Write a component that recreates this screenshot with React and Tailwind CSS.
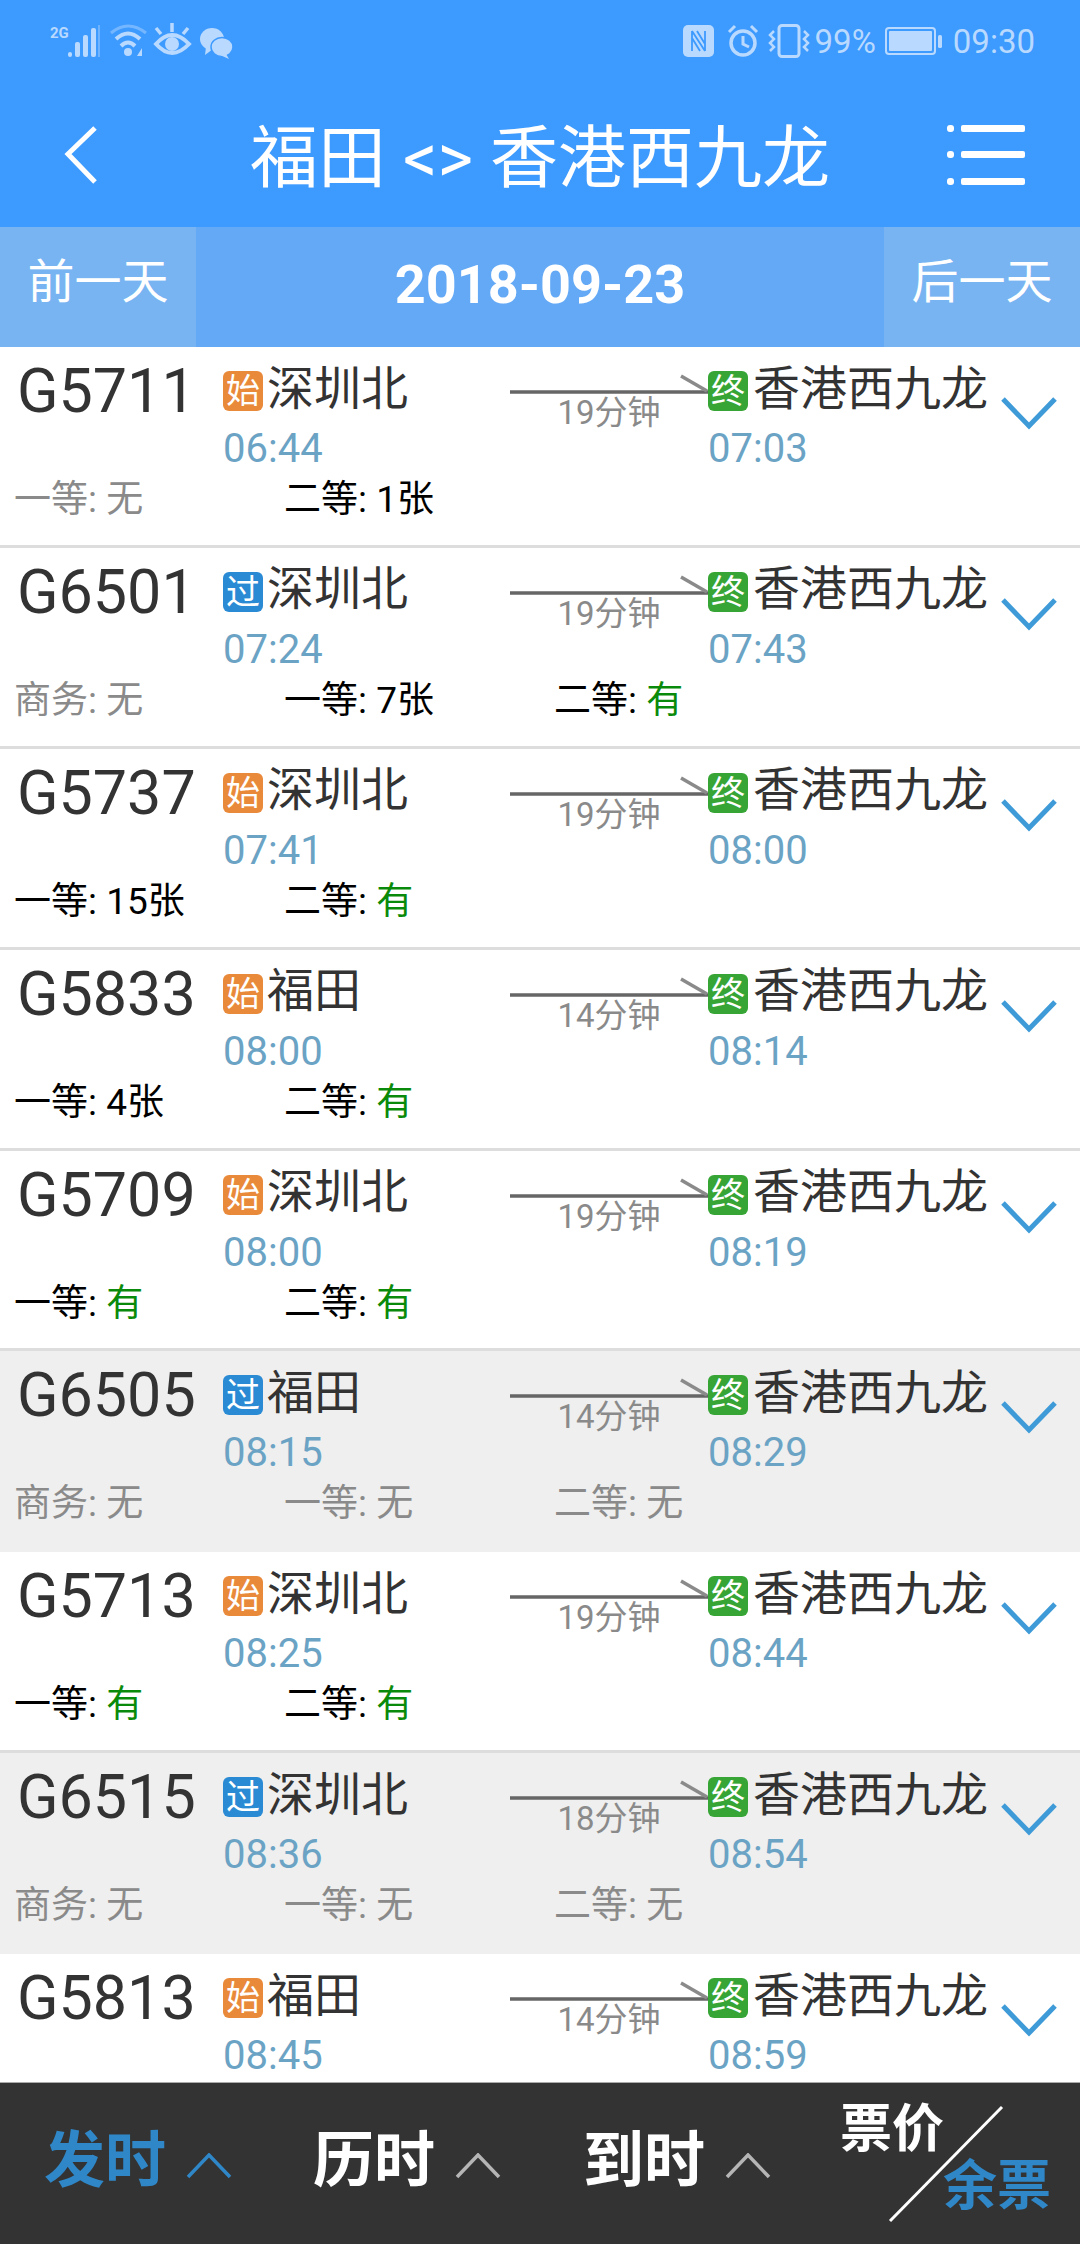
import React from "react";

const FONT = "font-['Roboto','Noto_Sans_CJK_SC',sans-serif]";

const trains = [
  { no: "G5711", tag: "始", from: "深圳北", dep: "06:44", dur: "19分钟", arr: "07:03", seats: [["一等", "无"], ["二等", "1张"]] },
  { no: "G6501", tag: "过", from: "深圳北", dep: "07:24", dur: "19分钟", arr: "07:43", seats: [["商务", "无"], ["一等", "7张"], ["二等", "有"]] },
  { no: "G5737", tag: "始", from: "深圳北", dep: "07:41", dur: "19分钟", arr: "08:00", seats: [["一等", "15张"], ["二等", "有"]] },
  { no: "G5833", tag: "始", from: "福田", dep: "08:00", dur: "14分钟", arr: "08:14", seats: [["一等", "4张"], ["二等", "有"]] },
  { no: "G5709", tag: "始", from: "深圳北", dep: "08:00", dur: "19分钟", arr: "08:19", seats: [["一等", "有"], ["二等", "有"]] },
  { no: "G6505", tag: "过", from: "福田", dep: "08:15", dur: "14分钟", arr: "08:29", soldOut: true, seats: [["商务", "无"], ["一等", "无"], ["二等", "无"]] },
  { no: "G5713", tag: "始", from: "深圳北", dep: "08:25", dur: "19分钟", arr: "08:44", seats: [["一等", "有"], ["二等", "有"]] },
  { no: "G6515", tag: "过", from: "深圳北", dep: "08:36", dur: "18分钟", arr: "08:54", soldOut: true, seats: [["商务", "无"], ["一等", "无"], ["二等", "无"]] },
  { no: "G5813", tag: "始", from: "福田", dep: "08:45", dur: "14分钟", arr: "08:59", seats: [] },
];

const Tag = ({ text }) => {
  const color = text === "始" ? "bg-[#e9893a]" : text === "过" ? "bg-[#2a8ad4]" : "bg-[#36a535]";
  return (
    <span className={`${color} w-10 h-10 rounded-md flex items-center justify-center text-white text-[34px] leading-none shrink-0`}>
      {text}
    </span>
  );
};

const Seat = ({ name, value }) => {
  const none = value === "无";
  return (
    <div className={`w-[270px] text-[37px] leading-[44px] whitespace-nowrap ${none ? "text-[#8a8a8a]" : "text-black"}`}>
      {name}: <span className={value === "有" ? "text-[#0a8a0a]" : ""}>{value}</span>
    </div>
  );
};

const TrainRow = ({ train }) => (
  <div className={`h-[200.9px] shrink-0 flex flex-col border-b-[3px] ${train.soldOut ? "bg-[#efefef] border-[#efefef]" : "bg-white border-[#dddddd]"}`}>
    <div className="flex h-[128px]">
      <div className="w-[223px] pl-[17px] pt-[9px] text-[61px] leading-[70px] text-[#333333] shrink-0">{train.no}</div>

      <div className="w-[287px] shrink-0">
        <div className="flex items-center h-[80px] pt-[8px]">
          <Tag text={train.tag} />
          <span className="text-[47px] leading-none text-[#333333] ml-[4px] -mt-[6px]">{train.from}</span>
        </div>
        <div className="text-[40px] leading-[44px] text-[#6ba3c5]">{train.dep}</div>
      </div>

      <div className="w-[198px] shrink-0 pt-[31px] relative">
        <svg width="198" height="20" viewBox="0 0 198 20" className="block absolute top-[27px] left-0">
          <path d="M0 18H198" stroke="#666666" strokeWidth="3.5" />
          <path d="M171 2L197 17" stroke="#8a8a8a" strokeWidth="3.5" />
        </svg>
        <div className="pt-[15px] text-center text-[33px] leading-[40px] text-[#8a8a8a]">{train.dur}</div>
      </div>

      <div className="w-[294px] shrink-0">
        <div className="flex items-center h-[80px] pt-[8px]">
          <Tag text="终" />
          <span className="text-[47px] leading-none text-[#333333] ml-[5px] -mt-[6px] whitespace-nowrap">香港西九龙</span>
        </div>
        <div className="text-[40px] leading-[44px] text-[#6ba3c5]">{train.arr}</div>
      </div>

      <svg width="58" height="36" viewBox="0 0 58 36" className="shrink-0 mt-[48px] -ml-[2px]">
        <path d="M3 4L29 31L55 4" fill="none" stroke="#3f9bd8" strokeWidth="5" />
      </svg>
    </div>
    <div className="flex pl-[14px] pt-[3px]">
      {train.seats.map((s) => (
        <Seat key={s[0]} name={s[0]} value={s[1]} />
      ))}
    </div>
  </div>
);

const SortBtn = ({ label, active, width }) => (
  <div className={`${width} flex items-center shrink-0`}>
    <span className={`text-[61px] font-bold leading-none -mt-[5px] ${active ? "text-[#2f87c8]" : "text-white"}`}>{label}</span>
    <svg width="46" height="26" viewBox="0 0 46 26" className="ml-[20px] mt-[4px]">
      <path d="M2 24L23 2L44 24" fill="none" stroke={active ? "#2f87c8" : "#b5b5b5"} strokeWidth="3.5" />
    </svg>
  </div>
);

const StatusBar = () => (
  <div className="h-[68px] relative flex justify-between items-start pt-[24px] pl-[50px] pr-[45px] text-[#b9d9ff]">
    <div className="flex items-end h-[36px]">
      <svg width="190" height="38" viewBox="0 0 190 38" fill="#b9d9ff">
        <text x="0" y="16" fontSize="15" fontWeight="700" fontFamily="Roboto">2G</text>
        <rect x="18" y="30" width="4" height="5" rx="2" />
        <rect x="25" y="20" width="5" height="15" rx="2" />
        <rect x="33" y="13" width="5" height="22" rx="2" />
        <rect x="41" y="6" width="5" height="29" rx="2" />
        <rect x="48" y="3" width="2" height="32" opacity="0.4" />
        <path d="M61 11Q78 -3 96 11" fill="none" stroke="#b9d9ff" strokeWidth="3" opacity="0.45" />
        <path d="M66 17Q78 6 90 17" fill="none" stroke="#b9d9ff" strokeWidth="4" />
        <path d="M71 24Q78 17 85 24" fill="none" stroke="#b9d9ff" strokeWidth="4" />
        <circle cx="78" cy="30" r="4" />
        <path d="M87 34L92 26V34Z" />
        <path d="M106 22Q122 4 139 22Q122 40 106 22Z" fill="none" stroke="#b9d9ff" strokeWidth="4" />
        <circle cx="122" cy="22" r="7" />
        <path d="M122 10V1M111 12L106 6M133 12L138 6" stroke="#b9d9ff" strokeWidth="3.5" />
        <ellipse cx="162" cy="17" rx="12" ry="11" />
        <path d="M156 25L155 33L163 27Z" />
        <ellipse cx="172" cy="25" rx="11" ry="9.5" stroke="#3d9aff" strokeWidth="1.5" />
        <path d="M176 32L179 37L170 33Z" />
      </svg>
    </div>
    <div className="flex items-center h-[34px] text-[33px] leading-none">
      <svg width="34" height="34" viewBox="0 0 34 34" className="mr-[10px]">
        <rect x="1" y="1" width="31" height="32" rx="5" fill="#b9d9ff" />
        <path d="M10 7V27M10 7L23 27M23 7V27M15 7L23 20M10 14L18 27" fill="none" stroke="#3d9aff" strokeWidth="1.8" />
      </svg>
      <svg width="34" height="34" viewBox="0 0 34 34" fill="none" stroke="#b9d9ff" className="mr-[8px]">
        <circle cx="17" cy="19" r="12" strokeWidth="3.5" />
        <path d="M17 12V20L23 23" strokeWidth="3" />
        <path d="M3 8L9 2M31 8L25 2" strokeWidth="3" />
      </svg>
      <svg width="42" height="34" viewBox="0 0 42 34" fill="none" stroke="#b9d9ff" className="mr-[5px]">
        <rect x="11" y="1.5" width="20" height="31" rx="3" strokeWidth="3" />
        <path d="M6 7L2 11L6 15L2 19L6 23L2 27M36 7L40 11L36 15L40 19L36 23L40 27" strokeWidth="2.5" />
      </svg>
      <span>99%</span>
      <svg width="60" height="28" viewBox="0 0 60 28" className="ml-[9px] mr-[8px]">
        <rect x="1" y="1" width="49" height="26" rx="3" fill="none" stroke="#b9d9ff" strokeWidth="2" />
        <rect x="4" y="4" width="43" height="20" rx="1" fill="#b9d9ff" />
        <rect x="53" y="8" width="4" height="13" rx="1.5" fill="#b9d9ff" />
      </svg>
      <span>09:30</span>
    </div>
  </div>
);

export default function App() {
  return (
    <div className={`${FONT} w-[1080px] h-[2244px] flex flex-col overflow-hidden bg-white`}>
      <div className="bg-[#3d9aff] shrink-0">
        <StatusBar />
        <div className="h-[159px] flex items-center relative">
          <svg width="38" height="60" viewBox="0 0 38 60" className="absolute left-[62px] top-[57px]">
            <path d="M33 3L6 29L33 57" fill="none" stroke="white" strokeWidth="5" />
          </svg>
          <div className="w-full text-center text-white text-[68px] leading-none whitespace-nowrap pt-[22px]">
            福田 &lt;&gt; 香港西九龙
          </div>
          <svg width="80" height="62" viewBox="0 0 80 62" className="absolute left-[946px] top-[56px]" fill="white">
            <rect x="1" y="1" width="7" height="7" rx="3" />
            <rect x="1" y="27" width="7" height="7" rx="3" />
            <rect x="1" y="54" width="7" height="7" rx="3" />
            <rect x="15" y="1" width="64" height="7" rx="2" />
            <rect x="15" y="27" width="64" height="7" rx="2" />
            <rect x="15" y="54" width="64" height="7" rx="2" />
          </svg>
        </div>
      </div>

      <div className="h-[120px] flex bg-[#63a9f6] text-white shrink-0">
        <div className="w-[196px] bg-[#78b4f2] flex items-center justify-center text-[47px] pb-[10px]">前一天</div>
        <div className="flex-1 flex items-center justify-center text-[54px] font-bold pb-[6px]">2018-09-23</div>
        <div className="w-[196px] bg-[#78b4f2] flex items-center justify-center text-[47px] pb-[10px]">后一天</div>
      </div>

      <div className="flex-1 overflow-hidden min-h-0">
        {trains.map((t) => (
          <TrainRow key={t.no} train={t} />
        ))}
      </div>

      <div className="h-[162px] shrink-0 bg-[#333333] border-t border-[#aaaaaa] relative flex items-center pl-[44px]">
        <SortBtn label="发时" active width="w-[269px]" />
        <SortBtn label="历时" width="w-[270px]" />
        <SortBtn label="到时" width="w-[257px]" />
        <div className="flex flex-col w-[220px] -mt-[11px] whitespace-nowrap">
          <span className="text-[52px] font-bold leading-[58px] text-white">票价</span>
          <span className="text-[54px] font-bold leading-[56px] text-[#2f87c8] pl-[103px]">余票</span>
        </div>
        <svg width="116" height="118" viewBox="0 0 116 118" className="absolute left-[888px] top-[22px]">
          <path d="M114 2L2 116" stroke="white" strokeWidth="3" />
        </svg>
      </div>
    </div>
  );
}
